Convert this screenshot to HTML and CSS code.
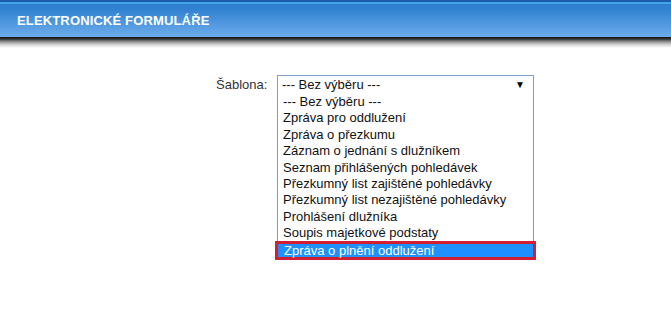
FILE: index.html
```html
<!DOCTYPE html>
<html lang="cs">
<head>
<meta charset="utf-8">
<title>Elektronické formuláře</title>
<link rel="stylesheet" href="styles.css">
</head>
<body>
<header class="topbar">
  <h1 class="title">ELEKTRONICKÉ FORMULÁŘE</h1>
</header>
<div class="topshadow"></div>
<main class="form">
  <div class="row">
    <div class="label">Šablona:</div>
    <div class="selectwrap">
      <div class="select">
        <span class="value">--- Bez výběru ---</span>
        <span class="arrow">▼</span>
      </div>
      <div class="list">
        <div class="opt">--- Bez výběru ---</div>
        <div class="opt">Zpráva pro oddlužení</div>
        <div class="opt">Zpráva o přezkumu</div>
        <div class="opt">Záznam o jednání s dlužníkem</div>
        <div class="opt">Seznam přihlášených pohledávek</div>
        <div class="opt">Přezkumný list zajištěné pohledávky</div>
        <div class="opt">Přezkumný list nezajištěné pohledávky</div>
        <div class="opt">Prohlášení dlužníka</div>
        <div class="opt">Soupis majetkové podstaty</div>
        <div class="opt selected">Zpráva o plnění oddlužení</div>
      </div>
    </div>
  </div>
</main>
</body>
</html>
```
FILE: styles.css
```css
html, body {
  margin: 0;
  padding: 0;
  background: #ffffff;
  font-family: "Liberation Sans", Arial, sans-serif;
}
.topbar {
  height: 33px;
  border-top: 2px solid #1d5ba7;
  box-shadow: inset 0 2px 0 #44a2e6;
  background: linear-gradient(to bottom, #2b7dcf 0px, #2f80d0 6px, #5a9fe3 26px, #6cacea 35px);
  padding-top: 2px;
  display: flex;
  align-items: center;
}
.title {
  margin: 0 0 0 17px;
  font-size: 13px;
  letter-spacing: 0.15px;
  font-weight: bold;
  color: #ffffff;
}
.topshadow {
  height: 11px;
  background: linear-gradient(to bottom, #12161c 0px, #2e2e2e 2px, #7d7d7d 4px, #c8c8c8 7px, #f2f2f2 10px, #ffffff 11px);
}
.form {
  padding-top: 27px;
}
.row {
  display: flex;
  align-items: flex-start;
  padding-left: 216px;
}
.label {
  font-size: 13px;
  color: #333;
  line-height: 19px;
  width: 61px;
}
.selectwrap {
  width: 257px;
}
.select {
  box-sizing: border-box;
  height: 19px;
  border: 1px solid #7f9ed6;
  display: flex;
  align-items: center;
  justify-content: space-between;
  padding: 0 8px 0 4px;
  font-size: 13px;
  color: #111;
  background: #fff;
}
.arrow {
  font-size: 10px;
  color: #000;
}
.list {
  box-sizing: border-box;
  width: 257px;
  padding-top: 1px;
  border: 1px solid #7f9db9;
  border-top: none;
  border-bottom: none;
  background: #fff;
  margin-top: -1px;
}
.opt {
  font-size: 13px;
  line-height: 16.4px;
  height: 16.4px;
  padding-left: 5px;
  color: #111;
  white-space: nowrap;
}
.opt.selected {
  background: #1e90ff;
  color: #fff;
  margin: -1px -3px 0 -3px;
  padding-left: 6px;
  border: 3px solid #d21f34;
  height: 13px;
  line-height: 13px;
}
```
